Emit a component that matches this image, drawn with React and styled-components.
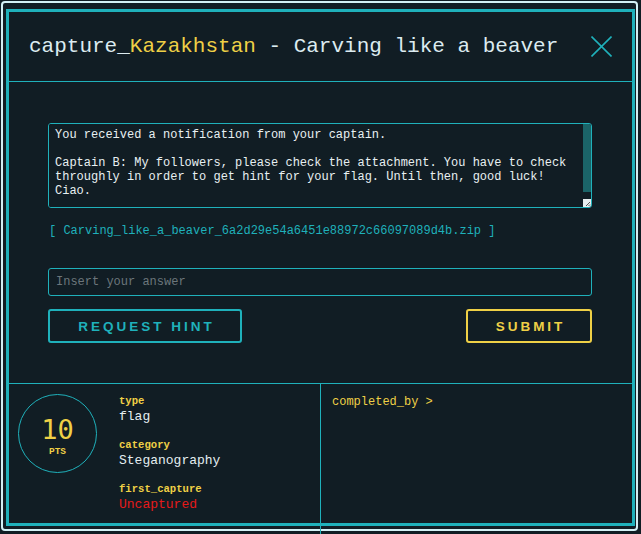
import React from 'react';
import styled, { createGlobalStyle } from 'styled-components';

const teal = '#1fb1bb';
const yellow = '#efd046';
const bg = '#111d24';
const mono = '"Liberation Mono", "DejaVu Sans Mono", monospace';

const GlobalStyle = createGlobalStyle`
    html, body {
        margin: 0;
        padding: 0;
        background: ${bg};
    }
    body {
        font-family: ${mono};
        overflow: hidden;
    }
`

//outer light frame around the modal
const Frame = styled.div`
    margin: 1px 3px 3px 1px;
    padding: 6px 1px 3px 3px;
    border: 2px solid #d3f0f5;
    border-radius: 4px;
`

const Modal = styled.div`
    border: 3px solid ${teal};
    background: ${bg};
`

const Header = styled.div`
    height: 69px;
    border-bottom: 1px solid ${teal};
    display: flex;
    align-items: center;
    justify-content: space-between;
    padding: 0 20px 0 20px;
`

const Title = styled.h1`
    margin: 0;
    font-family: ${mono};
    font-weight: normal;
    font-size: 21px;
    color: #dcebf0;
    white-space: pre;
`

const Highlight = styled.span`
    color: ${yellow};
`

const CloseButton = styled.button`
    background: none;
    border: none;
    padding: 0;
    width: 21px;
    height: 21px;
    display: flex;
    cursor: pointer;
`

const Body = styled.div`
    height: 302px;
    box-sizing: border-box;
    border-bottom: 1px solid ${teal};
    padding: 41px 40px 0 39px;
    display: flex;
    flex-direction: column;
`

//textarea plus its own scroll column, inside one border
const DescriptionBox = styled.div`
    box-sizing: border-box;
    height: 85px;
    display: flex;
    border: 1px solid ${teal};
    border-radius: 3px;
    overflow: hidden;
`

const Description = styled.textarea`
    flex: 1;
    margin: 0;
    padding: 4px 6px 0;
    background: ${bg};
    color: #e8f0f2;
    border: none;
    resize: none;
    font-family: ${mono};
    font-size: 12px;
    line-height: 14px;
    overflow: hidden;
    outline: none;
`

const ScrollTrack = styled.div`
    width: 8px;
    display: flex;
    flex-direction: column;
`

const ScrollThumb = styled.div`
    height: 68px;
    background: #1b6468;
`

const Resizer = styled.div`
    margin-top: auto;
    height: 8px;
    background: #e8eef0;
    display: flex;
    align-items: flex-end;
    justify-content: flex-end;
`

const Attachment = styled.a`
    margin-top: 16px;
    font-size: 12px;
    line-height: 14px;
    color: ${teal};
    text-decoration: none;
    padding-left: 1px;
`

const AnswerInput = styled.input`
    box-sizing: border-box;
    margin-top: 30px;
    width: 100%;
    height: 28px;
    padding: 0 7px;
    background: ${bg};
    border: 1px solid ${teal};
    border-radius: 3px;
    color: #e8f0f2;
    font-family: ${mono};
    font-size: 12px;
    outline: none;

    &::placeholder {
        color: #6c767b;
    }
`

const ButtonRow = styled.div`
    margin-top: 13px;
    display: flex;
    justify-content: space-between;
`

const ActionButton = styled.button`
    box-sizing: border-box;
    height: 34px;
    width: ${props => props.width}px;
    background: transparent;
    border: 2px solid ${props => props.color};
    border-radius: 3px;
    color: ${props => props.color};
    font-family: "Liberation Sans", Arial, sans-serif;
    font-weight: bold;
    font-size: 13.5px;
    letter-spacing: 3px;
    padding: 0 0 0 3px;
    cursor: pointer;
`

const Details = styled.div`
    height: 139px;
    display: grid;
    grid-template-columns: 312px 1fr;
`

const InfoColumn = styled.div`
    border-right: 1px solid ${teal};
    padding: 10px 9px;
    display: flex;
    gap: 22px;
`

const Points = styled.div`
    box-sizing: border-box;
    width: 79px;
    height: 79px;
    flex: none;
    border: 1px solid ${teal};
    border-radius: 50%;
    display: flex;
    flex-direction: column;
    align-items: center;
    justify-content: center;
    color: ${yellow};
`

const PointsValue = styled.div`
    font-family: "DejaVu Sans Mono", monospace;
    font-size: 27px;
    line-height: 26px;
    margin-top: 6px;
`

const PointsUnit = styled.div`
    font-family: ${mono};
    font-weight: bold;
    font-size: 9.5px;
    margin-top: 3px;
`

const Fields = styled.div`
    display: flex;
    flex-direction: column;
`

const Field = styled.div`
    margin-bottom: 14px;
`

const Label = styled.div`
    color: ${yellow};
    font-size: 10.6px;
    font-weight: bold;
    line-height: 14px;
`

const Value = styled.div`
    margin-top: 2px;
    color: ${props => props.red ? '#e51a1a' : '#e4eef1'};
    font-size: 13px;
    line-height: 14px;
`

const CompletedColumn = styled.div`
    padding: 11px 11px;
`

const CompletedLink = styled.div`
    color: ${yellow};
    font-size: 12px;
    line-height: 14px;
    cursor: pointer;
`

const CloseIcon = () => (
    <svg width="21" height="21" viewBox="0 0 21 21">
        <line x1="0.5" y1="0.5" x2="20.5" y2="20.5" stroke={teal} strokeWidth="1.6" />
        <line x1="20.5" y1="0.5" x2="0.5" y2="20.5" stroke={teal} strokeWidth="1.6" />
    </svg>
);

//little diagonal grip in the resize corner
const Grip = () => (
    <svg width="8" height="8" viewBox="0 0 8 8">
        <line x1="7" y1="3" x2="3" y2="7" stroke="#555" strokeWidth="1" />
        <line x1="7" y1="5.5" x2="5.5" y2="7" stroke="#555" strokeWidth="1" />
    </svg>
);

const description = 'You received a notification from your captain.\n\nCaptain B: My followers, please check the attachment. You have to check throughly in order to get hint for your flag. Until then, good luck! Ciao.';

const fields = [
    { label: 'type', value: 'flag' },
    { label: 'category', value: 'Steganography' },
    { label: 'first_capture', value: 'Uncaptured', red: true },
];

const App = () => {
    return (
        <>
            <GlobalStyle />
            <Frame>
                <Modal>
                    <Header>
                        <Title>capture_<Highlight>Kazakhstan</Highlight> - Carving like a beaver</Title>
                        <CloseButton aria-label="close"><CloseIcon /></CloseButton>
                    </Header>
                    <Body>
                        <DescriptionBox>
                            <Description readOnly defaultValue={description} />
                            <ScrollTrack>
                                <ScrollThumb />
                                <Resizer><Grip /></Resizer>
                            </ScrollTrack>
                        </DescriptionBox>
                        <Attachment href="#">[ Carving_like_a_beaver_6a2d29e54a6451e88972c66097089d4b.zip ]</Attachment>
                        <AnswerInput placeholder="Insert your answer" />
                        <ButtonRow>
                            <ActionButton color={teal} width={194}>REQUEST HINT</ActionButton>
                            <ActionButton color={yellow} width={126}>SUBMIT</ActionButton>
                        </ButtonRow>
                    </Body>
                    <Details>
                        <InfoColumn>
                            <Points>
                                <PointsValue>10</PointsValue>
                                <PointsUnit>PTS</PointsUnit>
                            </Points>
                            <Fields>
                                {fields.map(f => (
                                    <Field key={f.label}>
                                        <Label>{f.label}</Label>
                                        <Value red={f.red}>{f.value}</Value>
                                    </Field>
                                ))}
                            </Fields>
                        </InfoColumn>
                        <CompletedColumn>
                            <CompletedLink>completed_by &gt;</CompletedLink>
                        </CompletedColumn>
                    </Details>
                </Modal>
            </Frame>
        </>
    );
}

export default App;
